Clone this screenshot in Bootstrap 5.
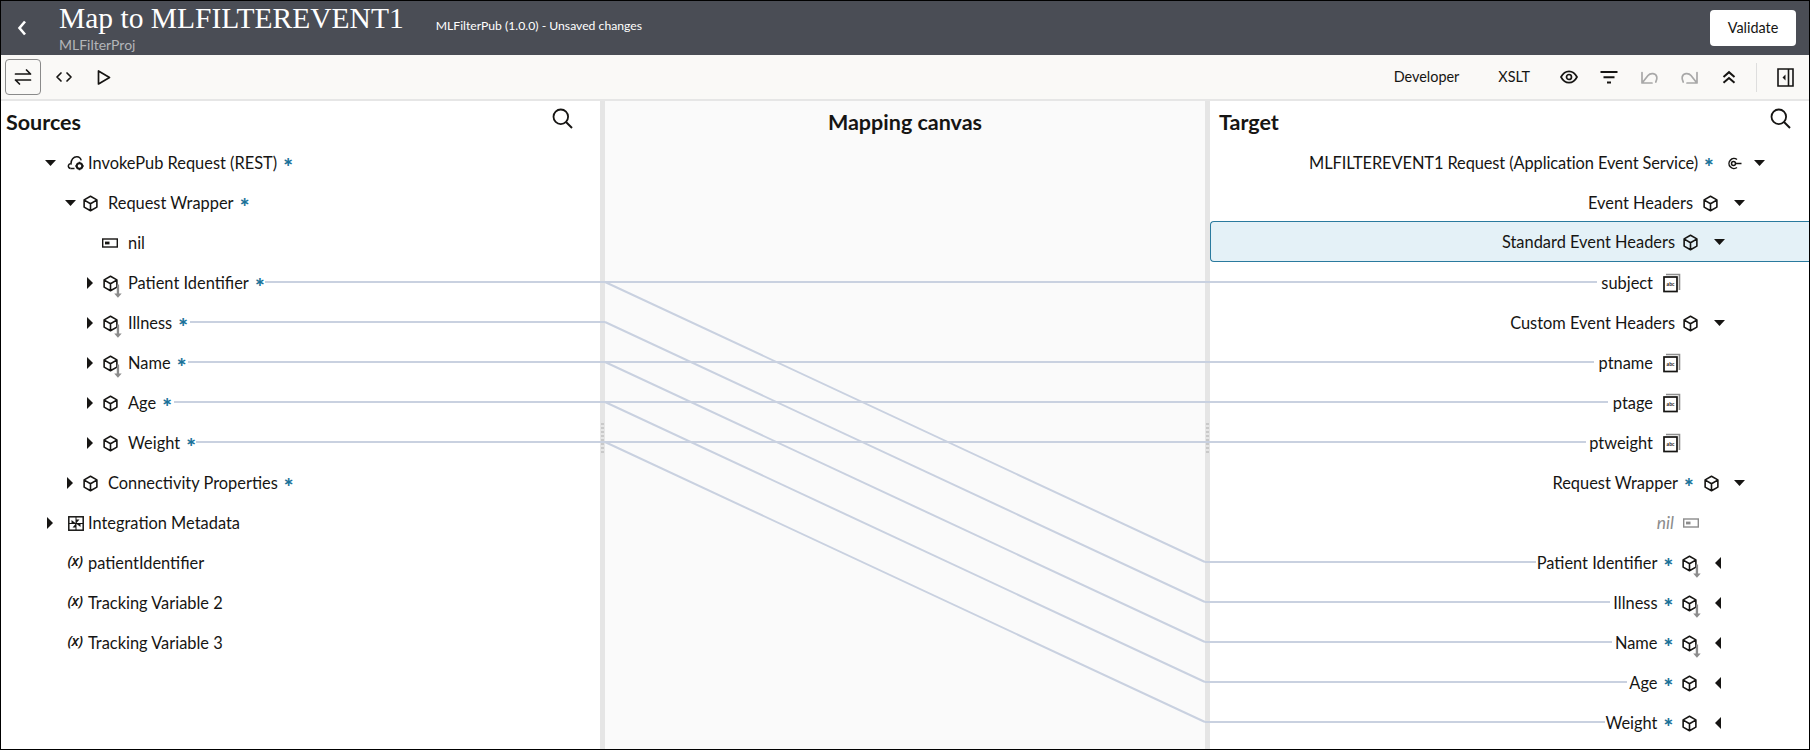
<!DOCTYPE html>
<html lang="en">
<head>
<meta charset="utf-8">
<title>Map to MLFILTEREVENT1</title>
<link href="https://cdn.jsdelivr.net/npm/bootstrap@5.3.0/dist/css/bootstrap.min.css" rel="stylesheet">
<style>
html,body{height:100%;margin:0;overflow:hidden;background:#fff}
body{font-family:Lato,"Noto Sans",sans-serif;font-size:16.4px;color:#161513}
.frame{width:1810px;height:750px;border:1px solid #000;position:relative;overflow:hidden}
.top-head{height:54px;background:#4a4d55;color:#fff}
.back-btn{width:42px;height:100%;color:#fff}
.ttl{font-family:"Liberation Serif",serif;font-size:29.5px;line-height:31px;white-space:nowrap;margin-top:-1px;color:#fff}
.sub-ttl{font-size:14px;line-height:16px;color:#b3b5b9;margin-top:3px}
.unsaved{font-size:12.2px;margin-left:32px;margin-top:-3px;color:#fff}
.validate{background:#fff;color:#161513;font-size:14.4px;width:86px;height:36px;border:0;border-radius:4px;padding:0;margin-right:13px;margin-top:-1px}
.validate:hover{background:#fff;color:#161513}
.tool-bar{height:46px;background:#faf9f7;border-bottom:2px solid #e6e6e6}
.tool-ic{width:40px;height:36px;flex:none;color:#161513}
.tool-toggle{width:36px;height:36px;margin-left:4px;border:1px solid #8a8a8a;border-radius:4px;flex:none}
.tool-first{margin-left:3px}
.tool-txt{font-size:14.4px;color:#161513}
.t-dev{margin-right:39px}
.t-xslt{margin-right:19px}
.tool-sep{width:1px;height:29px;background:#dedede;margin:0 20px 0 7px}
.tool-dis{color:#a8a8a8}
.panel-ic{margin-right:15px}
.work{height:648px}
.pane-l{width:599px;flex:none}
.split{width:5px;flex:none;background:#e5e5e5;position:relative}
.split::after{content:"";position:absolute;left:1px;right:1px;top:322px;height:31px;background:repeating-linear-gradient(#c9c9c9 0 2px,transparent 2px 4px)}
.pane-m{width:600px;flex:none;background:#fafafa}
.pane-r{flex:1 1 auto;min-width:0}
.pane-h{height:42px;font-size:21.5px;font-weight:700;line-height:42px}
.pane-h-l{padding-left:5px;padding-right:27px}
.pane-h-r{padding-left:9px;padding-right:18px}
.srch{margin-top:-8px}
.node{height:40px;display:flex;align-items:center;white-space:nowrap}
.in0{padding-left:39px}.in1{padding-left:59px}.in2{padding-left:79px}
.slot{width:20px;flex:none;display:flex;justify-content:center;align-items:center}
.gap6{margin-left:6px}.gap2{margin-left:2px}.gap8{margin-left:8px}
.star{color:#1a7299;font-weight:900;font-size:23px;line-height:21px;height:14px;width:10px;text-align:center;margin:0 6px;flex:none}
.var-ic{font-family:"Open Sans",sans-serif;font-style:italic;font-weight:600;font-size:14.5px;line-height:1;margin-top:-4px;letter-spacing:-.5px;margin-left:5px;margin-right:1px}
.node-r{justify-content:flex-end}
.tight{letter-spacing:-.09px}
.p40{padding-right:40px}.p61{padding-right:60px}.p80{padding-right:80px}.p82{padding-right:81.5px}.p109{padding-right:108px}.p128{padding-right:127px}
.sel-row{background:#e4f1f7;border:1px solid #2a7a9e;border-right:0;border-radius:4px 0 0 4px;height:41px;margin-top:-2px;margin-bottom:1px;padding-top:1px}
.m8{margin-left:8px}.m9{margin-left:9px}.m5{margin-left:5px}.m7{margin-left:7px}
.star-a{margin-right:10px}
.star-b{margin-right:7px}
.nil-txt{color:#8c8c8c;font-style:italic}
.nil-lbl{font-size:17.5px}
.wires{position:absolute;inset:0;width:1808px;height:748px;pointer-events:none}
svg{display:block;overflow:visible}
.tri{fill:#161513}
.ln{fill:none;stroke:currentColor;stroke-width:1.7;stroke-linecap:round;stroke-linejoin:round}
</style>
</head>
<body>
<svg width="0" height="0" class="position-absolute">
<defs>
<symbol id="cube" viewBox="0 0 16 16"><path d="M8 1.200 14 4.600v6.800L8 14.800 2 11.400V4.600zM2.200 4.800 8 8.200l5.800-3.400M8 8.200v6.400" fill="none" stroke="#161513" stroke-width="1.500" stroke-linejoin="round"/></symbol>
<symbol id="cubearrow" viewBox="0 0 24 24"><path d="M8 1.200 14 4.600v6.800L8 14.800 2 11.400V4.600zM2.200 4.800 8 8.200l5.800-3.400M8 8.200v6.400" fill="none" stroke="#161513" stroke-width="1.500" stroke-linejoin="round"/><path d="M15 9v10" stroke="#8c8c8c" stroke-width="2.200"/><path d="M11.500 17.500h7l-3.500 4z" fill="#8c8c8c"/></symbol>
<symbol id="nilic" viewBox="0 0 16 10"><rect x=".7" y="1" width="14.600" height="8" fill="none" stroke="currentColor" stroke-width="1.400"/><rect x="3" y="3.600" width="4.500" height="2.800" fill="currentColor"/></symbol>
</defs>
</svg>
<div class="frame d-flex flex-column">
  <header class="top-head d-flex align-items-center">
    <div class="back-btn d-flex align-items-center justify-content-center flex-none">
      <svg width="10" height="16" viewBox="0 0 10 16"><path d="M8 1.500 2.500 8 8 14.500" fill="none" stroke="#fff" stroke-width="2.600"/></svg>
    </div>
    <div class="ms-3">
      <div class="ttl">Map to MLFILTEREVENT1</div>
      <div class="sub-ttl">MLFilterProj</div>
    </div>
    <div class="unsaved">MLFilterPub (1.0.0) - Unsaved changes</div>
    <button type="button" class="btn validate ms-auto">Validate</button>
  </header>
  <div class="tool-bar d-flex align-items-center">
    <div class="tool-toggle d-flex align-items-center justify-content-center">
      <svg width="18" height="18" viewBox="0 0 18 18"><path class="ln" d="M1.500 6h15M12.500 2l4 4M16.500 12h-15M5.500 16l-4-4"/></svg>
    </div>
    <div class="tool-ic tool-first d-flex align-items-center justify-content-center">
      <svg width="16" height="10" viewBox="0 0 16 10"><path class="ln" d="M5 1 1 5l4 4M11 1l4 4-4 4"/></svg>
    </div>
    <div class="tool-ic d-flex align-items-center justify-content-center">
      <svg width="14" height="15" viewBox="0 0 14 15"><path class="ln" d="M1.500 1v13l11-6.500z"/></svg>
    </div>
    <div class="ms-auto d-flex align-items-center">
      <span class="tool-txt t-dev">Developer</span>
      <span class="tool-txt t-xslt">XSLT</span>
      <div class="tool-ic d-flex align-items-center justify-content-center">
        <svg width="18" height="14" viewBox="0 0 18 14"><path d="M1 7c2-3.800 4.800-5.700 8-5.700S15 3.200 17 7c-2 3.800-4.800 5.700-8 5.700S3 10.800 1 7z" fill="none" stroke="#161513" stroke-width="1.700"/><circle cx="9" cy="7" r="2.500" fill="none" stroke="#161513" stroke-width="1.700"/></svg>
      </div>
      <div class="tool-ic d-flex align-items-center justify-content-center">
        <svg width="18" height="13" viewBox="0 0 18 13"><path d="M.5 1h17M3.500 6.200h11M7 11.500h4" fill="none" stroke="#161513" stroke-width="2"/></svg>
      </div>
      <div class="tool-ic tool-dis d-flex align-items-center justify-content-center">
        <svg width="17" height="13" viewBox="0 0 17 13"><path class="ln" d="M1 1.500v10.500h10M1.500 11.500 7 4.500c2.500-3 8-2.500 8.800 1.500.3 1.500-.2 3.500-1 5"/></svg>
      </div>
      <div class="tool-ic tool-dis d-flex align-items-center justify-content-center">
        <svg width="17" height="13" viewBox="0 0 17 13"><path class="ln" d="M16 1.500v10.500h-10M15.500 11.500 10 4.500c-2.500-3-8-2.500-8.800 1.500-.3 1.500.2 3.500 1 5"/></svg>
      </div>
      <div class="tool-ic d-flex align-items-center justify-content-center">
        <svg width="14" height="13" viewBox="0 0 14 13"><path d="M1.500 6 7 1.200 12.500 6M1.500 11.800 7 7l5.500 4.800" fill="none" stroke="#161513" stroke-width="2"/></svg>
      </div>
      <div class="tool-sep"></div>
      <svg class="panel-ic" width="17" height="19" viewBox="0 0 17 19"><path d="M1 1h15v17H1zM11.500 1v17" fill="none" stroke="#161513" stroke-width="1.600"/><path d="M8.500 6.500v6l-3-3z" fill="#161513"/></svg>
    </div>
  </div>
  <main class="work d-flex">
    <section class="pane-l">
      <div class="pane-h pane-h-l d-flex justify-content-between align-items-center">
        <span>Sources</span>
        <svg class="srch" width="21" height="21" viewBox="0 0 21 21"><circle cx="8.800" cy="8.800" r="7.300" fill="none" stroke="#161513" stroke-width="1.800"/><path d="m14 14 6 6" stroke="#161513" stroke-width="2"/></svg>
      </div>
      <div class="node in0">
        <span class="slot"><svg width="11" height="6"><path class="tri" d="M0 0h11L5.500 6z"/></svg></span>
        <span class="slot gap6"><svg width="18" height="16" viewBox="0 0 18 16"><path d="M3.500 13.500C1.800 13 1 11.800 1.500 10.200 2 9 3 8.600 4 8.800 3.800 4.800 6.500 1.500 10 1.700c2.200.1 3.700 1.500 4.200 3.600" fill="none" stroke="#161513" stroke-width="1.500"/><path d="M3.500 13.500h4" stroke="#161513" stroke-width="1.500"/><circle cx="12.500" cy="11" r="2.800" fill="none" stroke="#161513" stroke-width="2"/><path d="M12.500 6.800v1.400M12.500 13.800v1.400M8.300 11h1.400M15.300 11h1.400" stroke="#161513" stroke-width="1.500"/></svg></span>
        <span class="gap2">InvokePub Request (REST)</span><span class="star">*</span>
      </div>
      <div class="node in1">
        <span class="slot"><svg width="11" height="6"><path class="tri" d="M0 0h11L5.500 6z"/></svg></span>
        <span class="slot"><svg width="17" height="17"><use href="#cube"/></svg></span>
        <span class="gap8">Request Wrapper</span><span class="star">*</span>
      </div>
      <div class="node in2">
        <span class="slot"></span>
        <span class="slot"><svg width="16" height="10"><use href="#nilic"/></svg></span>
        <span class="gap8">nil</span>
      </div>
      <div class="node in2">
        <span class="slot"><svg width="6" height="12"><path class="tri" d="M0 0l6 6-6 6z"/></svg></span>
        <span class="slot"><svg width="17" height="17" viewBox="0 0 16 16"><use href="#cubearrow" width="24" height="24"/></svg></span>
        <span class="gap8">Patient Identifier</span><span class="star">*</span>
      </div>
      <div class="node in2">
        <span class="slot"><svg width="6" height="12"><path class="tri" d="M0 0l6 6-6 6z"/></svg></span>
        <span class="slot"><svg width="17" height="17" viewBox="0 0 16 16"><use href="#cubearrow" width="24" height="24"/></svg></span>
        <span class="gap8">Illness</span><span class="star">*</span>
      </div>
      <div class="node in2">
        <span class="slot"><svg width="6" height="12"><path class="tri" d="M0 0l6 6-6 6z"/></svg></span>
        <span class="slot"><svg width="17" height="17" viewBox="0 0 16 16"><use href="#cubearrow" width="24" height="24"/></svg></span>
        <span class="gap8">Name</span><span class="star">*</span>
      </div>
      <div class="node in2">
        <span class="slot"><svg width="6" height="12"><path class="tri" d="M0 0l6 6-6 6z"/></svg></span>
        <span class="slot"><svg width="17" height="17"><use href="#cube"/></svg></span>
        <span class="gap8">Age</span><span class="star">*</span>
      </div>
      <div class="node in2">
        <span class="slot"><svg width="6" height="12"><path class="tri" d="M0 0l6 6-6 6z"/></svg></span>
        <span class="slot"><svg width="17" height="17"><use href="#cube"/></svg></span>
        <span class="gap8">Weight</span><span class="star">*</span>
      </div>
      <div class="node in1">
        <span class="slot"><svg width="6" height="12"><path class="tri" d="M0 0l6 6-6 6z"/></svg></span>
        <span class="slot"><svg width="17" height="17"><use href="#cube"/></svg></span>
        <span class="gap8">Connectivity Properties</span><span class="star">*</span>
      </div>
      <div class="node in0">
        <span class="slot"><svg width="6" height="12"><path class="tri" d="M0 0l6 6-6 6z"/></svg></span>
        <span class="slot gap6"><svg width="16" height="15" viewBox="0 0 16 15"><rect x=".8" y=".8" width="14.400" height="13.400" fill="none" stroke="#161513" stroke-width="1.500"/><path d="M8 1v13M1 7.500h14" stroke="#161513" stroke-width="1"/><path d="M8 7.500V3.500h3.500zM8 7.500h4.500v3.500zM8 7.500v4H4.500zM8 7.500H3.500V4z" fill="#161513"/></svg></span>
        <span class="gap2">Integration Metadata</span>
      </div>
      <div class="node in0"><span class="slot"></span><span class="slot var-ic">(x)</span><span class="gap2">patientIdentifier</span></div>
      <div class="node in0"><span class="slot"></span><span class="slot var-ic">(x)</span><span class="gap2">Tracking Variable 2</span></div>
      <div class="node in0"><span class="slot"></span><span class="slot var-ic">(x)</span><span class="gap2">Tracking Variable 3</span></div>
    </section>
    <div class="split"></div>
    <section class="pane-m">
      <div class="pane-h text-center">Mapping canvas</div>
    </section>
    <div class="split"></div>
    <section class="pane-r">
      <div class="pane-h pane-h-r d-flex justify-content-between align-items-center">
        <span>Target</span>
        <svg class="srch" width="21" height="21" viewBox="0 0 21 21"><circle cx="8.800" cy="8.800" r="7.300" fill="none" stroke="#161513" stroke-width="1.800"/><path d="m14 14 6 6" stroke="#161513" stroke-width="2"/></svg>
      </div>
      <div class="node node-r p40">
        <span class="tight">MLFILTEREVENT1 Request (Application Event Service)</span><span class="star star-a">*</span>
        <span class="slot"><svg width="15" height="13" viewBox="0 0 15 13"><path d="M10 2.500A5 5 0 1 0 10 10.500" fill="none" stroke="#161513" stroke-width="1.500"/><circle cx="6.500" cy="6.500" r="2" fill="none" stroke="#161513" stroke-width="1.500"/><path d="M8 6.500h6.500" stroke="#161513" stroke-width="1.500"/></svg></span>
        <span class="slot m5"><svg width="11" height="6"><path class="tri" d="M0 0h11L5.500 6z"/></svg></span>
      </div>
      <div class="node node-r p61">
        <span>Event Headers</span>
        <span class="slot m7"><svg width="17" height="17"><use href="#cube"/></svg></span>
        <span class="slot m9"><svg width="11" height="6"><path class="tri" d="M0 0h11L5.500 6z"/></svg></span>
      </div>
      <div class="node node-r p80 sel-row">
        <span>Standard Event Headers</span>
        <span class="slot m5"><svg width="17" height="17"><use href="#cube"/></svg></span>
        <span class="slot m9"><svg width="11" height="6"><path class="tri" d="M0 0h11L5.500 6z"/></svg></span>
      </div>
      <div class="node node-r p128">
        <span>subject</span>
        <span class="slot m9"><svg width="18" height="20" viewBox="0 0 18 20"><path d="M3 1.500h13.500V17" fill="none" stroke="#8f8f8f" stroke-width="1.600"/><rect x="1" y="4" width="13" height="14.500" fill="#fff" stroke="#161513" stroke-width="1.700"/><text x="7.500" y="13" font-size="5" font-weight="700" text-anchor="middle" fill="#161513">abc</text></svg></span>
      </div>
      <div class="node node-r p80">
        <span>Custom Event Headers</span>
        <span class="slot m5"><svg width="17" height="17"><use href="#cube"/></svg></span>
        <span class="slot m9"><svg width="11" height="6"><path class="tri" d="M0 0h11L5.500 6z"/></svg></span>
      </div>
      <div class="node node-r p128">
        <span>ptname</span>
        <span class="slot m9"><svg width="18" height="20" viewBox="0 0 18 20"><path d="M3 1.500h13.500V17" fill="none" stroke="#8f8f8f" stroke-width="1.600"/><rect x="1" y="4" width="13" height="14.500" fill="#fff" stroke="#161513" stroke-width="1.700"/><text x="7.500" y="13" font-size="5" font-weight="700" text-anchor="middle" fill="#161513">abc</text></svg></span>
      </div>
      <div class="node node-r p128">
        <span>ptage</span>
        <span class="slot m9"><svg width="18" height="20" viewBox="0 0 18 20"><path d="M3 1.500h13.500V17" fill="none" stroke="#8f8f8f" stroke-width="1.600"/><rect x="1" y="4" width="13" height="14.500" fill="#fff" stroke="#161513" stroke-width="1.700"/><text x="7.500" y="13" font-size="5" font-weight="700" text-anchor="middle" fill="#161513">abc</text></svg></span>
      </div>
      <div class="node node-r p128">
        <span>ptweight</span>
        <span class="slot m9"><svg width="18" height="20" viewBox="0 0 18 20"><path d="M3 1.500h13.500V17" fill="none" stroke="#8f8f8f" stroke-width="1.600"/><rect x="1" y="4" width="13" height="14.500" fill="#fff" stroke="#161513" stroke-width="1.700"/><text x="7.500" y="13" font-size="5" font-weight="700" text-anchor="middle" fill="#161513">abc</text></svg></span>
      </div>
      <div class="node node-r p61">
        <span>Request Wrapper</span><span class="star star-b">*</span>
        <span class="slot"><svg width="17" height="17"><use href="#cube"/></svg></span>
        <span class="slot m8"><svg width="11" height="6"><path class="tri" d="M0 0h11L5.500 6z"/></svg></span>
      </div>
      <div class="node node-r p109">
        <span class="nil-txt nil-lbl">nil</span>
        <span class="slot m7 nil-txt"><svg width="16" height="10"><use href="#nilic"/></svg></span>
      </div>
      <div class="node node-r p82">
        <span>Patient Identifier</span><span class="star">*</span>
        <span class="slot"><svg width="17" height="17" viewBox="0 0 16 16"><use href="#cubearrow" width="24" height="24"/></svg></span>
        <span class="slot m8"><svg width="6" height="12"><path class="tri" d="M6 0 0 6l6 6z"/></svg></span>
      </div>
      <div class="node node-r p82">
        <span>Illness</span><span class="star">*</span>
        <span class="slot"><svg width="17" height="17" viewBox="0 0 16 16"><use href="#cubearrow" width="24" height="24"/></svg></span>
        <span class="slot m8"><svg width="6" height="12"><path class="tri" d="M6 0 0 6l6 6z"/></svg></span>
      </div>
      <div class="node node-r p82">
        <span>Name</span><span class="star">*</span>
        <span class="slot"><svg width="17" height="17" viewBox="0 0 16 16"><use href="#cubearrow" width="24" height="24"/></svg></span>
        <span class="slot m8"><svg width="6" height="12"><path class="tri" d="M6 0 0 6l6 6z"/></svg></span>
      </div>
      <div class="node node-r p82">
        <span>Age</span><span class="star">*</span>
        <span class="slot"><svg width="17" height="17"><use href="#cube"/></svg></span>
        <span class="slot m8"><svg width="6" height="12"><path class="tri" d="M6 0 0 6l6 6z"/></svg></span>
      </div>
      <div class="node node-r p82">
        <span>Weight</span><span class="star">*</span>
        <span class="slot"><svg width="17" height="17"><use href="#cube"/></svg></span>
        <span class="slot m8"><svg width="6" height="12"><path class="tri" d="M6 0 0 6l6 6z"/></svg></span>
      </div>
    </section>
  </main>
  <svg class="wires" viewBox="1 1 1808 748">
    <g fill="none" stroke="#c9d1e0" stroke-width="2">
      <path d="M265 282H1597M190 322H605M188 362H1594M174 402H1608M196 442H1586"/>
      <path d="M1205 562H1536M1205 602H1610M1205 642H1612M1205 682H1627M1205 722H1605"/>
      <path d="M605 282 1205 562M605 322 1205 602M605 362 1205 642M605 402 1205 682M605 442 1205 722"/>
    </g>
  </svg>
</div>
<script src="https://cdn.jsdelivr.net/npm/bootstrap@5.3.0/dist/js/bootstrap.bundle.min.js"></script>
</body>
</html>
